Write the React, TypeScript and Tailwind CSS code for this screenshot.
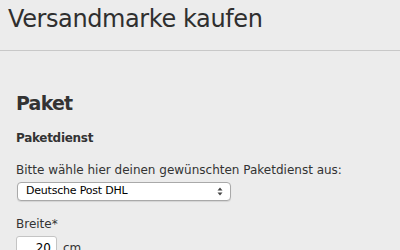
export default function App() {
  return (
    <div className="h-[250px] w-[400px] overflow-hidden bg-[#ececec] text-[#333] font-['DejaVu_Sans',sans-serif]">
      <div className="border-b border-[#c8c8c8] px-2 pt-[4px] h-[51px]">
        <h1 className="text-[24px] leading-[30px] tracking-[-0.4px] text-[#2f2f2f]">Versandmarke kaufen</h1>
      </div>
      <div className="px-4 pt-[40px]">
        <h2 className="text-[19px] font-bold leading-[24px] tracking-[-0.8px] text-[#333]">Paket</h2>
        <h3 className="mt-[14px] text-[12px] font-bold leading-[18px] tracking-[-0.3px]">Paketdienst</h3>
        <p className="mt-[15px] text-[12px] leading-[16px]">Bitte wähle hier deinen gewünschten Paketdienst aus:</p>
        <div className="mt-[4px] ml-px flex h-[19px] w-[214px] items-center justify-between rounded-[4px] border border-[#a9a9a9] bg-white pl-[8px] pr-[7px] shadow-[0_1px_1px_rgba(0,0,0,0.1)]">
          <span className="text-[11px] tracking-[-0.2px] text-black">Deutsche Post DHL</span>
          <svg width="6" height="9" viewBox="0 0 6 9">
            <path d="M0.5 3.5 L3 0.5 L5.5 3.5Z M0.5 5.5 L3 8.5 L5.5 5.5Z" fill="#444" />
          </svg>
        </div>
        <div className="mt-[15px] text-[12px] leading-[16px]">Breite*</div>
        <div className="mt-[4px] flex items-start gap-[6px]">
          <div className="h-[22px] w-[41px] rounded-[3px] border border-[#c4c4c4] bg-white pr-[5px] pt-[3px] text-right text-[12px] leading-[16px] text-black">20</div>
          <span className="pt-[4px] text-[12px] leading-[16px]">cm</span>
        </div>
      </div>
    </div>
  );
}
